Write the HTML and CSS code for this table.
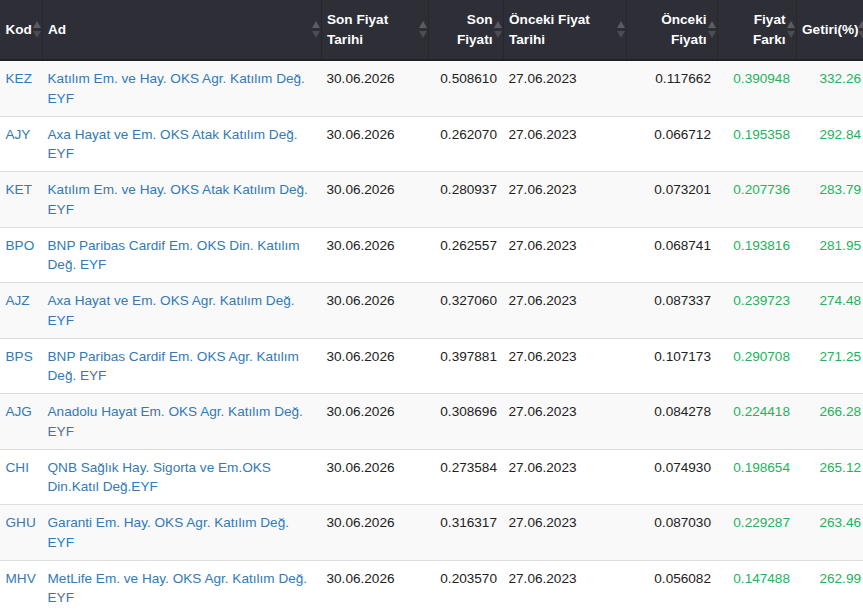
FILE: index.html
```html
<!DOCTYPE html>
<html lang="tr">
<head>
<meta charset="utf-8">
<title>Getiri</title>
<link rel="stylesheet" href="styles.css">
</head>
<body>
<table class="grid">
  <colgroup>
    <col class="c-kod"><col class="c-ad"><col class="c-sft"><col class="c-sf"><col class="c-oft"><col class="c-of"><col class="c-ff"><col class="c-gt">
  </colgroup>
  <thead>
    <tr>
      <th class="left">Kod<span class="sort"></span></th>
      <th class="left">Ad<span class="sort"></span></th>
      <th class="left">Son Fiyat Tarihi<span class="sort"></span></th>
      <th class="right">Son Fiyatı<span class="sort"></span></th>
      <th class="left">Önceki Fiyat Tarihi<span class="sort"></span></th>
      <th class="right">Önceki Fiyatı<span class="sort"></span></th>
      <th class="right">Fiyat Farkı<span class="sort"></span></th>
      <th class="right">Getiri(%)<span class="sort"></span></th>
    </tr>
  </thead>
  <tbody>
    <tr><td><a href="#">KEZ</a></td><td><a href="#">Katılım Em. ve Hay. OKS Agr. Katılım Değ. EYF</a></td><td>30.06.2026</td><td class="num">0.508610</td><td>27.06.2023</td><td class="num">0.117662</td><td class="num pos">0.390948</td><td class="num pos">332.26</td></tr>
    <tr><td><a href="#">AJY</a></td><td><a href="#">Axa Hayat ve Em. OKS Atak Katılım Değ. EYF</a></td><td>30.06.2026</td><td class="num">0.262070</td><td>27.06.2023</td><td class="num">0.066712</td><td class="num pos">0.195358</td><td class="num pos">292.84</td></tr>
    <tr><td><a href="#">KET</a></td><td><a href="#">Katılım Em. ve Hay. OKS Atak Katılım Değ. EYF</a></td><td>30.06.2026</td><td class="num">0.280937</td><td>27.06.2023</td><td class="num">0.073201</td><td class="num pos">0.207736</td><td class="num pos">283.79</td></tr>
    <tr><td><a href="#">BPO</a></td><td><a href="#">BNP Paribas Cardif Em. OKS Din. Katılım Değ. EYF</a></td><td>30.06.2026</td><td class="num">0.262557</td><td>27.06.2023</td><td class="num">0.068741</td><td class="num pos">0.193816</td><td class="num pos">281.95</td></tr>
    <tr><td><a href="#">AJZ</a></td><td><a href="#">Axa Hayat ve Em. OKS Agr. Katılım Değ. EYF</a></td><td>30.06.2026</td><td class="num">0.327060</td><td>27.06.2023</td><td class="num">0.087337</td><td class="num pos">0.239723</td><td class="num pos">274.48</td></tr>
    <tr><td><a href="#">BPS</a></td><td><a href="#">BNP Paribas Cardif Em. OKS Agr. Katılım Değ. EYF</a></td><td>30.06.2026</td><td class="num">0.397881</td><td>27.06.2023</td><td class="num">0.107173</td><td class="num pos">0.290708</td><td class="num pos">271.25</td></tr>
    <tr><td><a href="#">AJG</a></td><td><a href="#">Anadolu Hayat Em. OKS Agr. Katılım Değ. EYF</a></td><td>30.06.2026</td><td class="num">0.308696</td><td>27.06.2023</td><td class="num">0.084278</td><td class="num pos">0.224418</td><td class="num pos">266.28</td></tr>
    <tr><td><a href="#">CHI</a></td><td><a href="#">QNB Sağlık Hay. Sigorta ve Em.OKS Din.Katıl Değ.EYF</a></td><td>30.06.2026</td><td class="num">0.273584</td><td>27.06.2023</td><td class="num">0.074930</td><td class="num pos">0.198654</td><td class="num pos">265.12</td></tr>
    <tr><td><a href="#">GHU</a></td><td><a href="#">Garanti Em. Hay. OKS Agr. Katılım Değ. EYF</a></td><td>30.06.2026</td><td class="num">0.316317</td><td>27.06.2023</td><td class="num">0.087030</td><td class="num pos">0.229287</td><td class="num pos">263.46</td></tr>
    <tr><td><a href="#">MHV</a></td><td><a href="#">MetLife Em. ve Hay. OKS Agr. Katılım Değ. EYF</a></td><td>30.06.2026</td><td class="num">0.203570</td><td>27.06.2023</td><td class="num">0.056082</td><td class="num pos">0.147488</td><td class="num pos">262.99</td></tr>
  </tbody>
</table>
</body>
</html>
```

FILE: styles.css
```css
html, body {
  margin: 0;
  padding: 0;
  background: #ffffff;
  overflow: hidden;
}

body {
  font-family: "Liberation Sans", Arial, sans-serif;
  font-size: 13.6px;
  line-height: 19.46px;
  color: #222;
}

.grid {
  width: 867px;
  table-layout: fixed;
  border-collapse: collapse;
  border-spacing: 0;
}

.c-kod { width: 42px; }
.c-ad { width: 279px; }
.c-sft { width: 107px; }
.c-sf { width: 75px; }
.c-oft { width: 123px; }
.c-of { width: 91px; }
.c-ff { width: 79px; }
.c-gt { width: 71px; }

.grid thead th {
  position: relative;
  background: #2d2e36;
  color: #ffffff;
  font-weight: bold;
  vertical-align: middle;
  padding: 10.2px 10px 10.4px 5.5px;
  border-left: 1px solid #26272d;
  border-bottom: 2px solid #1f2025;
}

.grid thead th:first-child { border-left: 0; }

.grid thead th.left { text-align: left; }
.grid thead th.right { text-align: right; }

.sort {
  position: absolute;
  right: 1px;
  top: 50%;
  width: 8px;
  height: 17px;
  margin-top: -9px;
}

.sort::before,
.sort::after {
  content: "";
  position: absolute;
  left: 0;
  width: 0;
  height: 0;
  border-left: 4px solid transparent;
  border-right: 4px solid transparent;
}

.sort::before {
  top: 0;
  border-bottom: 7px solid #5a5b63;
}

.sort::after {
  bottom: 0;
  border-top: 7px solid #4b4c54;
}

.grid tbody td {
  vertical-align: top;
  padding: 8px 5.5px 7.6px 5.5px;
  border-top: 1px solid #dddddd;
}

.grid tbody tr:first-child td { border-top: 0; }

.grid tbody tr:nth-child(odd) td { background: #f9f9f9; }

.grid tbody a {
  color: #337ab7;
  text-decoration: none;
}

.grid td.num {
  text-align: right;
  padding-right: 6px;
}

.grid td.pos { color: #22b35c; }
```
